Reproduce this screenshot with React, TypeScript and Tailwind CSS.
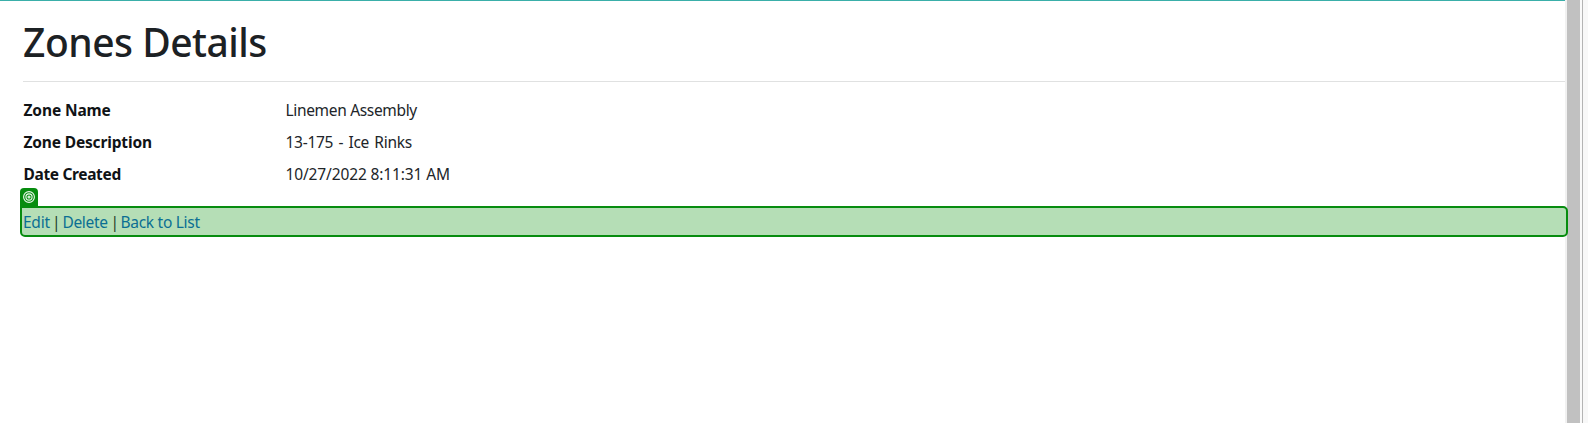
const rows = [
  { label: "Zone Name", value: "Linemen Assembly", l: "tracking-[-0.12px]", v: "tracking-[-0.33px]" },
  { label: "Zone Description", value: "13-175 - Ice Rinks", l: "tracking-[-0.16px]", v: "tracking-[-0.27px] [word-spacing:1.5px]" },
  { label: "Date Created", value: "10/27/2022 8:11:31 AM", l: "tracking-[-0.35px]", v: "tracking-[-0.13px]" },
];

function TargetIcon() {
  return (
    <svg width="12" height="12" viewBox="0 0 12 12" fill="none" stroke="#eefaee" strokeWidth="1.1">
      <circle cx="6" cy="6" r="5.4" />
      <circle cx="6" cy="6" r="3.1" />
      <circle cx="6" cy="6" r="1" />
    </svg>
  );
}

export default function App() {
  return (
    <div className="flex h-[423px] w-[1588px] overflow-hidden bg-white font-['Noto_Sans',sans-serif] text-[15.5px] leading-6 text-[#212529]">
      <main className="h-full w-[1565px] shrink-0 border-t border-[#3aafa9] pl-[23px]">
        <h1 className="mt-[18px] h-12 text-[39px] leading-[46px] font-medium tracking-[-0.5px] whitespace-nowrap text-[#1c2124]">Zones Details</h1>
        <hr className="mt-[14px] border-[#e0e1e1]" />
        <dl className="mt-4 flex flex-col gap-2">
          {rows.map((r) => (
            <div key={r.label} className="flex h-6 whitespace-nowrap">
              <dt className={`w-[262px] pl-[0.5px] font-bold text-[#101316] ${r.l}`}>{r.label}</dt>
              <dd className={`pl-[0.5px] ${r.v}`}>{r.value}</dd>
            </div>
          ))}
        </dl>
        <div className="relative z-10 mt-5 -ml-[3px] h-[31px] w-[1548px] rounded-[5px] rounded-tl-none border-2 border-[#078c0f] bg-[#b5deb6] pt-[2px] pl-[1px]">
          <span className="absolute -top-5 -left-0.5 flex h-[19px] w-[18px] justify-center rounded-t-[4px] bg-[#078c0f] pt-[3px]">
            <TargetIcon />
          </span>
          <nav className="flex whitespace-nowrap text-[#0b6f93]">
            <a className="w-[29px] tracking-[-0.25px]">Edit</a>
            <span className="w-[10.5px] text-[#213c29]">|</span>
            <a className="w-[48px] tracking-[-0.35px]">Delete</a>
            <span className="w-[10px] text-[#213c29]">|</span>
            <a className="tracking-[-0.28px]">Back to List</a>
          </nav>
        </div>
      </main>
      <div className="flex h-full w-[23px] bg-[#f1f1f1]">
        <div className="ml-0.5 w-[13px] bg-[#c1c1c1]" />
        <div className="w-0.5 bg-[#fafafa]" />
        <div className="w-px bg-[#b4b4b4]" />
        <div className="flex-1 bg-[#f8f8f8]" />
      </div>
    </div>
  );
}
